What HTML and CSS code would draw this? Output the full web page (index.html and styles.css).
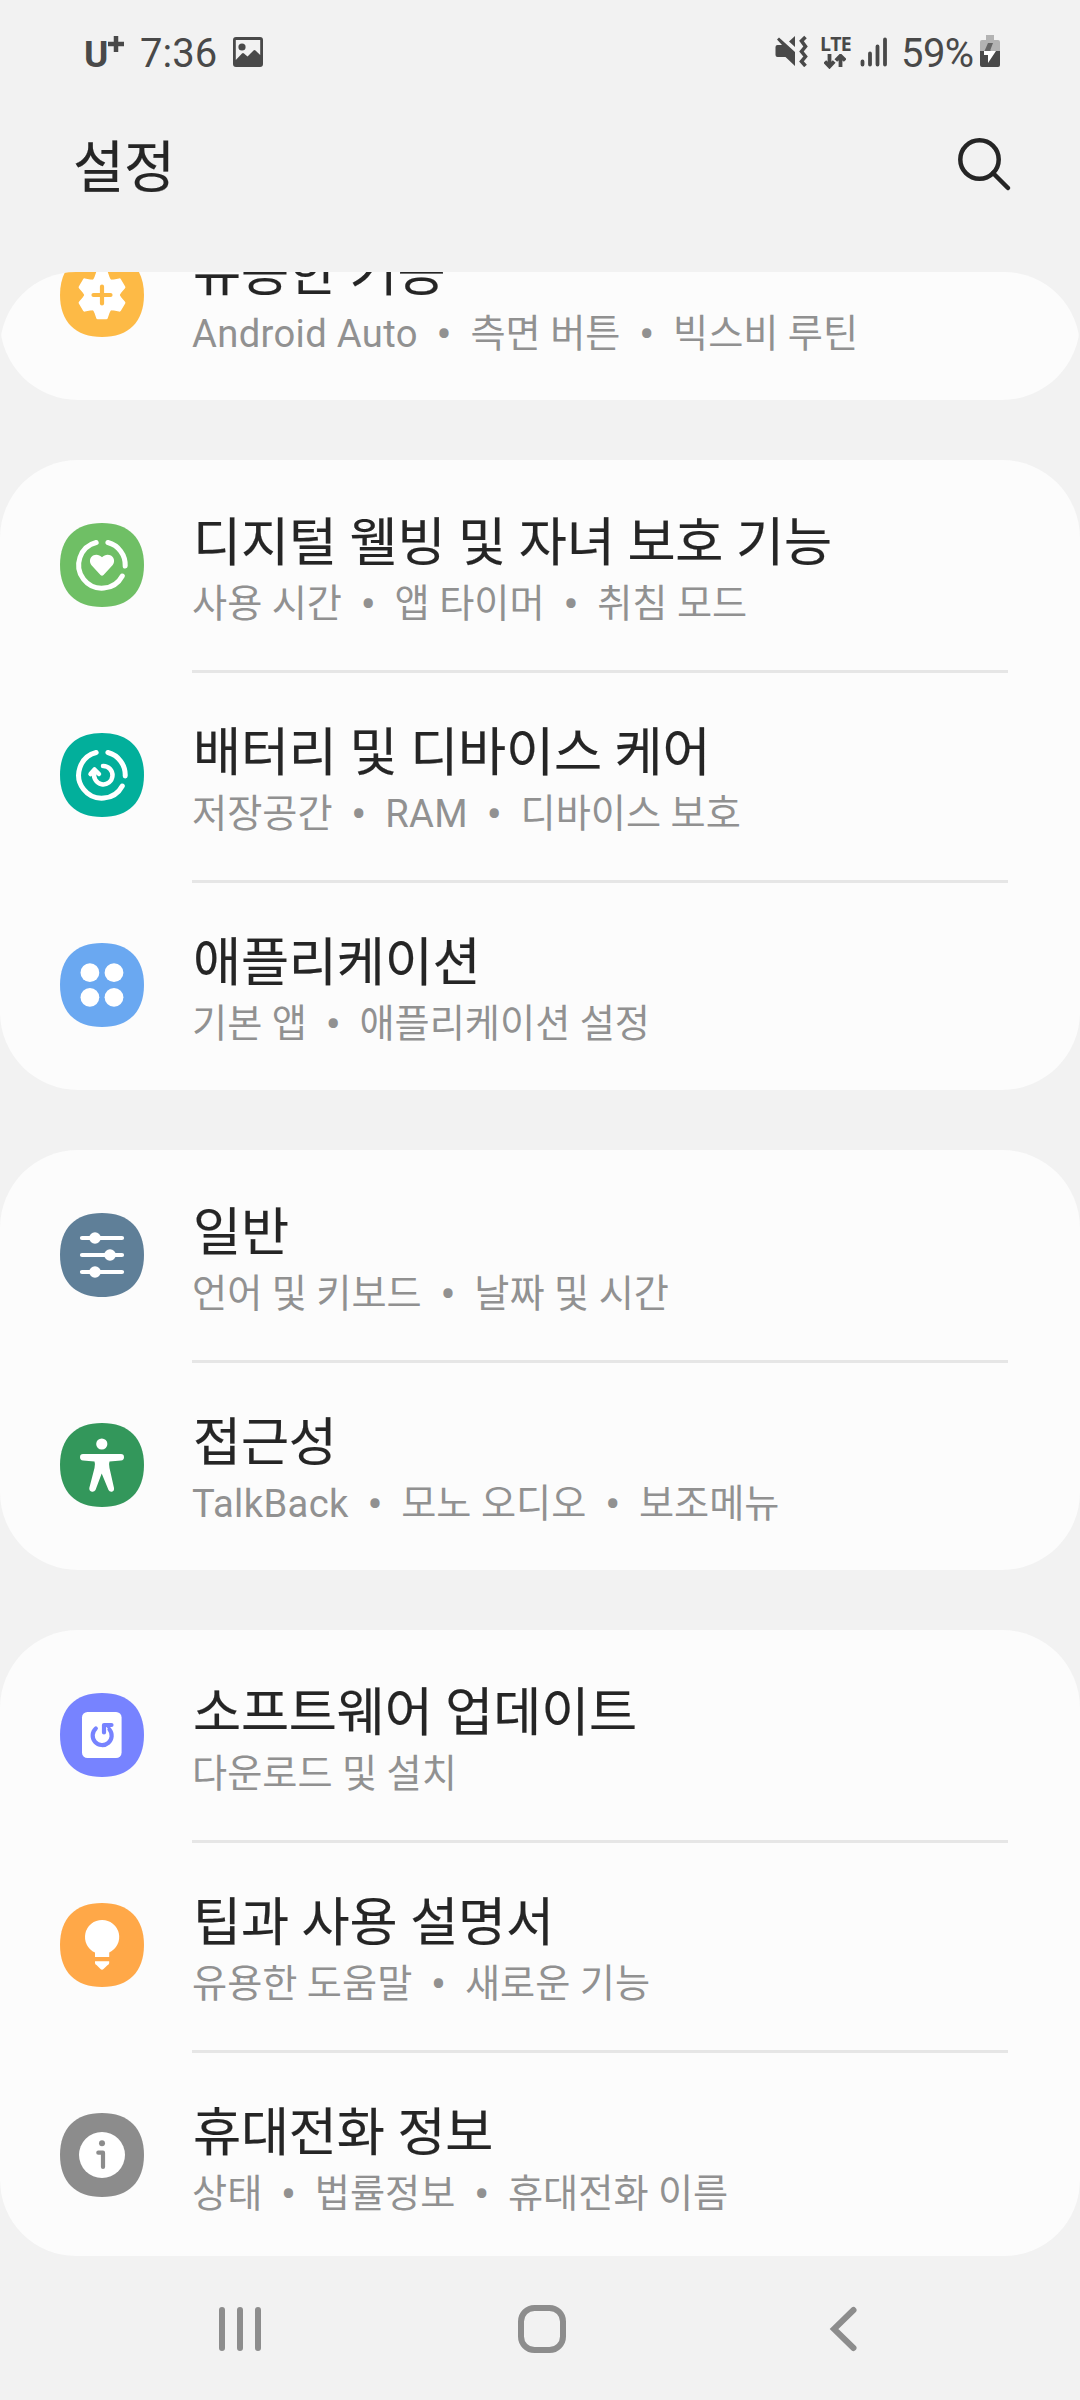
FILE: index.html
```html
<!DOCTYPE html>
<html lang="ko">
<head>
<meta charset="utf-8">
<title>설정</title>
<link rel="stylesheet" href="styles.css">
</head>
<body>
<header class="status">
  <div class="status-left">
    <span class="carrier">U<svg class="plus" viewBox="0 0 16 16"><path d="M8 0V16M0 8H16"/></svg></span>
    <span class="clock">7:36</span>
    <svg class="picture" viewBox="0 0 30 30"><path fill-rule="evenodd" d="M3 0H27Q30 0 30 3V27Q30 30 27 30H3Q0 30 0 27V3Q0 0 3 0ZM2.800 3V23L9 16.500Q10 15.500 11 16.500L14.500 19.500L20.500 13.400Q21.500 12.400 22.500 13.400L27.200 18V3Z"/><circle cx="9" cy="10" r="3.600"/></svg>
  </div>
  <div class="status-right">
    <svg class="mute" viewBox="0 0 33 32"><path d="M2.500 10H7L2 4.500L4 2.500L20 17V31L10.500 22H2.500Q.5 22 .5 20V12Q.5 10 2.500 10ZM14 6.500L20 1V12Z"/><path class="wave" d="M30.500 2L26.500 6L30.500 11.500L26.500 16.500L30.500 21.500L26.500 26.500L30.500 31"/></svg>
    <div class="network">
      <span class="lte">LTE</span>
      <svg class="arrows" viewBox="0 0 22 15"><path d="M5.500 0V12M.8 7.500L5.500 12.500L10.200 7.500M16.500 13V2M11.800 6.500L16.500 1.800L21.200 6.500"/></svg>
    </div>
    <svg class="signal" viewBox="0 0 28 30"><path d="M2.500 24.500V27.500M10 16.500V27.500M17.500 9.500V27.500M25 2.500V27.500"/></svg>
    <span class="percent">59%</span>
    <svg class="battery" viewBox="0 0 20 32"><path fill="#b3b3b3" d="M6 0H14V5H18Q20 5 20 7V16H0V7Q0 5 2 5H6Z"/><path fill="#494949" d="M0 16H20V30Q20 32 18 32H2Q0 32 0 30Z"/><path fill="#666" d="M8 8H13L10.500 14.500V16H4.500Z"/><path fill="#fff" d="M4 16H16L8 28V20H4Z"/></svg>
  </div>
</header>

<div class="title-bar">
  <h1>설정</h1>
  <svg class="search" viewBox="0 0 54 54"><circle cx="21.500" cy="21.500" r="19.200"/><path d="M35 35L50 50"/></svg>
</div>

<main class="viewport">
  <div class="list">
    <section class="card">
      <article class="row">
        <svg class="icon features" viewBox="0 0 84 84"><use href="#tile"/><g class="solid" transform="translate(42 42)"><circle r="17.500"/><path id="tooth" d="M-10-13L-7.500-18L-5.800-23Q-5.500-24.300-4.300-24.300H4.300Q5.500-24.300 5.800-23L7.500-18L10-13Z"/><use href="#tooth" transform="rotate(60)"/><use href="#tooth" transform="rotate(120)"/><use href="#tooth" transform="rotate(180)"/><use href="#tooth" transform="rotate(240)"/><use href="#tooth" transform="rotate(300)"/></g><path class="mark" d="M42 33.500V50.500M33.500 42H50.500"/></svg>
        <div class="copy"><h2>유용한 기능</h2><p><span class="latin">Android Auto</span><i>•</i>측면 버튼<i>•</i>빅스비 루틴</p></div>
      </article>
    </section>

    <section class="card">
      <article class="row">
        <svg class="icon wellbeing" viewBox="0 0 84 84"><path id="tile" d="M42 0C68.700 0 84 15.300 84 42S68.700 84 42 84 0 68.700 0 42 15.300 0 42 0Z"/><path id="ring" class="line" d="M47.900 19.500A23.200 23.200 0 0 1 65.200 43M62.300 53A23.200 23.200 0 1 1 36.200 19.500"/><path class="solid" d="M42 34.300C44.500 31.600 48 31 51 32.600C54.500 34.700 55 39.300 52.500 42.300L43.500 52Q42 53.500 40.500 52L31.500 42.300C29 39.300 29.500 34.700 33 32.600C36 31 39.500 31.600 42 34.300Z"/></svg>
        <div class="copy"><h2>디지털 웰빙 및 자녀 보호 기능</h2><p>사용 시간<i>•</i>앱 타이머<i>•</i>취침 모드</p></div>
      </article>
      <article class="row">
        <svg class="icon care" viewBox="0 0 84 84"><use href="#tile"/><use href="#ring"/><path class="line thin" d="M43 33A9.200 9.200 0 1 1 34.500 39.500"/><path class="line thin" d="M30.500 41L34.500 36.500L39 41"/></svg>
        <div class="copy"><h2>배터리 및 디바이스 케어</h2><p>저장공간<i>•</i><span class="latin">RAM</span><i>•</i>디바이스 보호</p></div>
      </article>
      <article class="row">
        <svg class="icon apps" viewBox="0 0 84 84"><use href="#tile"/><g class="solid"><circle cx="29.900" cy="29.700" r="9.400"/><circle cx="54" cy="29.700" r="9.400"/><circle cx="29.900" cy="54.300" r="9.400"/><circle cx="54" cy="54.300" r="9.400"/></g></svg>
        <div class="copy"><h2>애플리케이션</h2><p>기본 앱<i>•</i>애플리케이션 설정</p></div>
      </article>
    </section>

    <section class="card">
      <article class="row">
        <svg class="icon general" viewBox="0 0 84 84"><use href="#tile"/><path class="line slider" d="M22 25H62M22 42H62M22 59H62"/><g class="solid"><circle cx="35" cy="25" r="5.800"/><circle cx="50" cy="42" r="5.800"/><circle cx="35" cy="59" r="5.800"/></g></svg>
        <div class="copy"><h2>일반</h2><p>언어 및 키보드<i>•</i>날짜 및 시간</p></div>
      </article>
      <article class="row">
        <svg class="icon access" viewBox="0 0 84 84"><use href="#tile"/><g class="solid"><circle cx="41.800" cy="21" r="5.600"/><path d="M23 31H61Q64 31 64 34.300Q64 37.300 61 37.600L49.500 38.500Q48.500 41 49.500 45L54 65Q54.500 68 51.800 68.700Q49.500 69 48.500 67L41.700 50.500L35.500 67Q34.300 69 32 68.700Q29 68 29.300 65L34.500 45Q35.500 41 34.500 38.500L23 37.600Q20 37.300 20 34.300Q20 31 23 31Z"/></g></svg>
        <div class="copy"><h2>접근성</h2><p><span class="latin">TalkBack</span><i>•</i>모노 오디오<i>•</i>보조메뉴</p></div>
      </article>
    </section>

    <section class="card">
      <article class="row">
        <svg class="icon software" viewBox="0 0 84 84"><use href="#tile"/><rect class="solid" x="22" y="19" width="39.600" height="46" rx="5.500"/><path class="mark" d="M35.800 35.500A9.500 9.500 0 1 0 49.500 36.500M44 39.500V32H51.500"/><path d="M44 31H52L49 37Z"/></svg>
        <div class="copy"><h2>소프트웨어 업데이트</h2><p>다운로드 및 설치</p></div>
      </article>
      <article class="row">
        <svg class="icon tips" viewBox="0 0 84 84"><use href="#tile"/><path class="solid" d="M42 17A17 17 0 0 1 49.200 49.500V54H35V49.500A17 17 0 0 1 42 17ZM35 58.300H49.200V60Q49.200 61.500 47.700 62L43.500 66Q42 67.400 40.500 66L36.500 62Q35 61.500 35 60Z"/></svg>
        <div class="copy"><h2>팁과 사용 설명서</h2><p>유용한 도움말<i>•</i>새로운 기능</p></div>
      </article>
      <article class="row">
        <svg class="icon about" viewBox="0 0 84 84"><use href="#tile"/><circle class="solid" cx="42" cy="42" r="23"/><circle cx="42" cy="30.300" r="3"/><path class="mark" d="M38.300 39.700H43V54"/></svg>
        <div class="copy"><h2>휴대전화 정보</h2><p>상태<i>•</i>법률정보<i>•</i>휴대전화 이름</p></div>
      </article>
    </section>
  </div>
</main>

<nav class="nav">
  <svg viewBox="0 0 48 48"><path d="M6 5V43M24 5V43M42 5V43"/></svg>
  <svg viewBox="0 0 48 48"><rect x="3" y="3" width="42" height="42" rx="13.500"/></svg>
  <svg viewBox="0 0 48 48"><path d="M34.500 5L15 24L34.500 43"/></svg>
</nav>
</body>
</html>
```
FILE: styles.css
```css
* {
  box-sizing: border-box;
}

body {
  margin: 0;
  width: 1080px;
  height: 2400px;
  overflow: hidden;
  display: flex;
  flex-direction: column;
  background: #f2f2f2;
  font-family: Roboto, "Noto Sans CJK KR", sans-serif;
  color: #252525;
}

h1, h2, p {
  margin: 0;
  font-weight: 400;
  white-space: nowrap;
}

h1, h2 {
  -webkit-text-stroke: 0.2px currentColor;
}

svg {
  display: block;
  flex: none;
}

/* Status bar */
.status {
  height: 104px;
  padding: 0 80px 0 84px;
  display: flex;
  justify-content: space-between;
  align-items: flex-start;
  color: #494949;
  fill: #494949;
}

.status-left,
.status-right {
  display: flex;
  align-items: flex-start;
}

.carrier {
  display: flex;
  width: 56px;
  padding-top: 35px;
  font: 700 37px/40px Roboto, sans-serif;
}

.plus {
  width: 16px;
  height: 16px;
  margin-top: 1px;
  fill: none;
  stroke: #494949;
  stroke-width: 4.5;
}

.clock,
.percent {
  padding-top: 30px;
  font-size: 40px;
  line-height: 48px;
}

.clock {
  width: 93px;
}

.picture {
  width: 30px;
  height: 30px;
  margin-top: 37px;
}

.mute {
  width: 33px;
  height: 32px;
  margin: 35px 12px 0 0;
}

.wave {
  fill: none;
  stroke: #494949;
  stroke-width: 3.6;
}

.network {
  width: 40px;
  padding-top: 35px;
}

.lte {
  display: block;
  font: 700 19.500px/17px "Open Sans", sans-serif;
  letter-spacing: -0.8px;
}

.arrows {
  width: 22px;
  height: 15px;
  margin: 2px 0 0 4px;
  fill: none;
  stroke: #494949;
  stroke-width: 3.8;
}

.signal {
  width: 28px;
  height: 30px;
  margin: 37px 13px 0 0;
  stroke: #494949;
  stroke-width: 3.8;
  stroke-linecap: round;
}

.percent {
  width: 79px;
  letter-spacing: -0.6px;
}

.battery {
  width: 20px;
  height: 32px;
  margin-top: 35px;
}

/* Title bar */
.title-bar {
  height: 168px;
  padding: 31px 68px 0 73px;
  display: flex;
  justify-content: space-between;
  align-items: flex-start;
}

h1 {
  font-size: 55.500px;
  line-height: 68px;
}

.search {
  width: 54px;
  height: 54px;
  margin-top: 3px;
  fill: none;
  stroke: #252525;
  stroke-width: 4.500;
  stroke-linecap: round;
}

/* Scrolling list, rounded at both ends of its window */
.viewport {
  height: 1984px;
  overflow: hidden;
  border-radius: 76px;
}

.list {
  display: flex;
  flex-direction: column;
  gap: 60px;
  margin-top: -82px;
}

.card {
  border-radius: 78px;
  background: #fcfcfc;
}

.row {
  height: 210px;
  padding: 0 72px 0 60px;
  display: flex;
  align-items: center;
  gap: 48px;
}

.copy {
  flex: 1;
  height: 210px;
  padding-top: 52px;
}

.row + .row .copy {
  border-top: 3px solid #e6e6e6;
  padding-top: 49px;
}

h2 {
  padding-left: 1px;
  font-size: 52.300px;
  line-height: 62px;
  letter-spacing: -0.2px;
}

p {
  height: 44px;
  margin-top: 8px;
  font-size: 38.200px;
  line-height: 44px;
  color: #919191;
}

.latin {
  letter-spacing: 0.33px;
}

i {
  display: inline-block;
  width: 52.6px;
  font-size: 46px;
  font-style: normal;
  line-height: 30px;
  text-align: center;
  vertical-align: -3px;
}

.icon {
  width: 84px;
  height: 84px;
}

.solid {
  fill: #fff;
}

.line {
  fill: none;
  stroke: #fff;
  stroke-width: 5;
  stroke-linecap: round;
}

.thin {
  stroke-width: 4.5;
  stroke-linejoin: round;
}

.slider {
  stroke-width: 4.2;
}

.mark {
  fill: none;
  stroke: currentColor;
  stroke-width: 4.200;
  stroke-linecap: round;
  stroke-linejoin: round;
}

.features { color: #fdba46; fill: #fdba46; }
.wellbeing { fill: #6fbf65; }
.care { fill: #02af9b; }
.apps { fill: #6aa8f1; }
.general { fill: #5f7f98; }
.access { fill: #33975b; }
.software { color: #7783ff; fill: #7783ff; }
.tips { fill: #ffa848; }
.about { color: #8c8c8c; fill: #8c8c8c; }

/* Navigation bar */
.nav {
  height: 144px;
  padding: 49px 213px 0 216px;
  display: flex;
  justify-content: space-between;
  fill: none;
  stroke: #8d8d8d;
  stroke-width: 6;
  stroke-linecap: round;
}

.nav svg {
  width: 48px;
  height: 48px;
}
```
